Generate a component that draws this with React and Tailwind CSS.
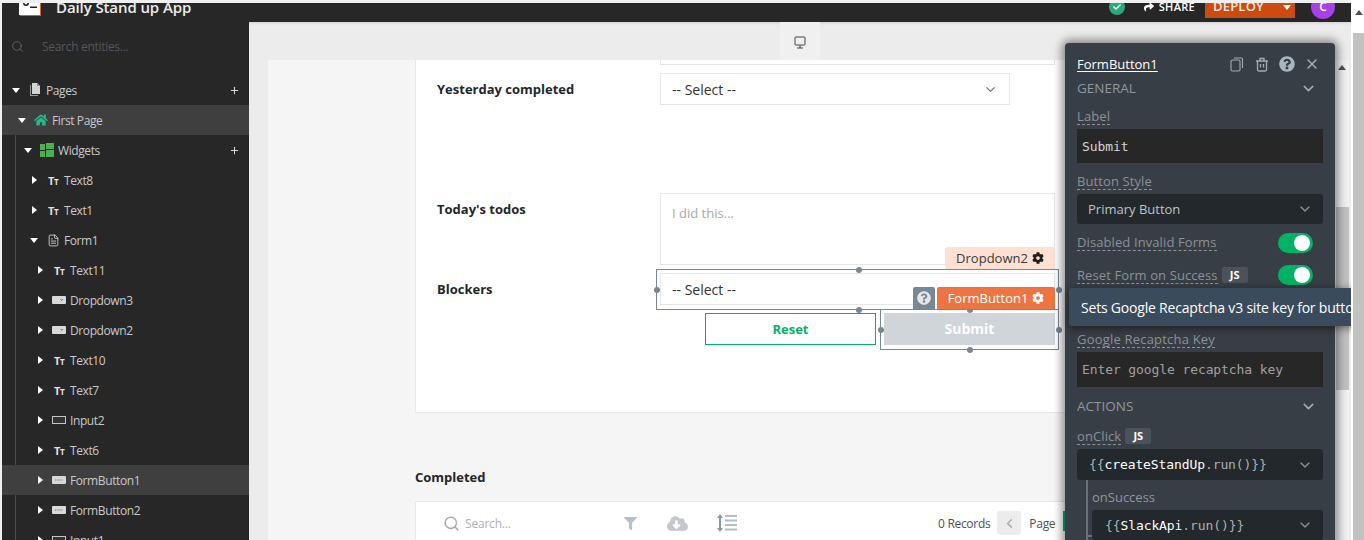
import { ChevronDown, ChevronLeft, Plus, Search, X, FileText } from 'lucide-react'
import { FaCog, FaHome, FaShare, FaFilter, FaCloudDownloadAlt, FaQuestionCircle, FaCheck } from 'react-icons/fa'

const sans = '[font-family:"Open_Sans",sans-serif]'

// tree icons
function TextIcon() {
  return (
    <span className="flex items-baseline font-bold leading-none text-[#e2e2e2]">
      <span className="text-[11px]">T</span>
      <span className="text-[8px]">T</span>
    </span>
  )
}

function DropdownIcon() {
  return (
    <svg width="14" height="8" viewBox="0 0 14 8" className="shrink-0">
      <rect width="14" height="8" rx="1" fill="#d8d8d8" />
      <path d="M8.500 3l1.200 1.400L11 3" fill="none" stroke="#555" strokeWidth="0.8" />
    </svg>
  )
}

function InputIcon() {
  return (
    <svg width="14" height="8" viewBox="0 0 14 8" className="shrink-0">
      <rect x="0.500" y="0.500" width="13" height="7" fill="#333" stroke="#c4c4c4" />
    </svg>
  )
}

function ButtonIcon() {
  return (
    <svg width="14" height="8" viewBox="0 0 14 8" className="shrink-0">
      <rect width="14" height="8" rx="1" fill="#d8d8d8" />
      <path d="M3 4h8" stroke="#777" strokeWidth="1.200" strokeDasharray="1 0.600" />
    </svg>
  )
}

function PagesIcon() {
  return (
    <svg width="12" height="14" viewBox="0 0 12 14" className="shrink-0">
      <path d="M1 2v11h8v-1H2V2z" fill="#9a9a9a" />
      <path d="M3 0h5l3 3v8H3z" fill="#d4d4d4" />
      <path d="M8 0v3h3z" fill="#8a8a8a" />
    </svg>
  )
}

function WidgetsIcon() {
  return (
    <svg width="14" height="14" viewBox="0 0 14 14" className="shrink-0">
      <rect width="5" height="6" y="1" fill="#4caf50" />
      <rect x="6" width="8" height="6" fill="#4caf50" />
      <rect y="8" width="5" height="6" fill="#4caf50" />
      <rect x="6" y="7" width="8" height="7" fill="#4caf50" />
    </svg>
  )
}

function Caret({ open }) {
  if (open) {
    return <span className="mr-[8px] h-0 w-0 shrink-0 border-x-[4px] border-t-[5px] border-x-transparent border-t-white" />
  }
  return <span className="mr-[9px] h-0 w-0 shrink-0 border-y-[4px] border-l-[5px] border-y-transparent border-l-white" />
}

function Row({ pad, open, icon, label, active, add, line }) {
  return (
    <div className={`relative flex h-[30px] items-center text-[12px] tracking-[-0.4px] text-[#c9c9c9] ${active ? 'bg-[#3f3f3f]' : ''} ${pad}`}>
      {line && <span className="absolute bottom-0 left-[13px] top-0 w-px bg-[#4a4a4a]" />}
      <Caret open={open} />
      <span className="flex w-[14px] shrink-0 justify-center">{icon}</span>
      <span className="ml-[4px] pt-[2px]">{label}</span>
      {add && <Plus size={11} strokeWidth={2.2} className="absolute left-[227px] text-[#d8d8d8]" />}
    </div>
  )
}

function Sidebar() {
  const deep = 'pl-[36px]'
  const inner = 'pl-[30px]'
  return (
    <aside className="w-[247px] shrink-0 bg-[#272727]">
      <div className="flex h-[53px] items-center gap-[18px] pb-[4px] pl-[9px] text-[12px] tracking-[-0.3px] text-[#55555c]">
        <Search size={13} strokeWidth={1.6} className="text-[#60666b]" />
        <span>Search entities...</span>
      </div>
      <Row pad="pl-[10px]" open icon={<PagesIcon />} label="Pages" add />
      <Row pad="pl-[16px]" open active icon={<FaHome size={14} className="shrink-0 text-[#2bb58a]" />} label="First Page" />
      <Row pad="pl-[22px]" open line icon={<WidgetsIcon />} label="Widgets" add />
      <Row pad={inner} line icon={<TextIcon />} label="Text8" />
      <Row pad={inner} line icon={<TextIcon />} label="Text1" />
      <Row pad="pl-[28px]" open line icon={<FileText size={13} strokeWidth={1.5} className="shrink-0 text-[#e2e2e2]" />} label="Form1" />
      <Row pad={deep} line icon={<TextIcon />} label="Text11" />
      <Row pad={deep} line icon={<DropdownIcon />} label="Dropdown3" />
      <Row pad={deep} line icon={<DropdownIcon />} label="Dropdown2" />
      <Row pad={deep} line icon={<TextIcon />} label="Text10" />
      <Row pad={deep} line icon={<TextIcon />} label="Text7" />
      <Row pad={deep} line icon={<InputIcon />} label="Input2" />
      <Row pad={deep} line icon={<TextIcon />} label="Text6" />
      <Row pad={deep} active icon={<ButtonIcon />} label="FormButton1" />
      <Row pad={deep} line icon={<ButtonIcon />} label="FormButton2" />
      <Row pad={deep} line icon={<InputIcon />} label="Input1" />
    </aside>
  )
}

function Header() {
  return (
    <header className="h-[19px] shrink-0 overflow-hidden bg-[#272727]">
      <div className="flex h-[8px] items-center pl-[17px] pr-[16px] text-white">
        <svg width="22" height="18" viewBox="0 0 22 18" className="shrink-0">
          <rect x="1" y="0" width="21" height="18" fill="#d9622b" />
          <rect x="0" y="0" width="21" height="17" fill="#fff" />
          <circle cx="7" cy="5" r="2.200" fill="none" stroke="#222" strokeWidth="1.600" />
          <rect x="11" y="8.500" width="7" height="1.500" fill="#222" />
        </svg>
        <span className="ml-[15px] text-[15px] font-semibold leading-none tracking-[-0.1px] text-[#ececec]">Daily Stand up App</span>
        <div className="ml-auto flex items-center">
          <span className="flex h-[16px] w-[16px] items-center justify-center rounded-full bg-[#2fa77d]">
            <FaCheck size={8} className="text-[#d8f5ea]" />
          </span>
          <FaShare size={10} className="ml-[19px] text-white" />
          <span className="ml-[5px] text-[11px] font-semibold tracking-[0.3px]">SHARE</span>
          <div className="ml-[10px] flex h-[22px] w-[90px] items-center bg-[#cb4b10] pl-[8px] text-[13px] font-semibold tracking-[0.2px] text-[#ffe7db]">
            <span>DEPLOY</span>
            <span className="ml-[19px] h-0 w-0 border-x-[4px] border-t-[5px] border-x-transparent border-t-white" />
          </div>
          <span className="ml-[16px] flex h-[24px] w-[24px] items-center justify-center rounded-full bg-[#a93fe8] text-[12px] font-semibold">C</span>
        </div>
      </div>
    </header>
  )
}

function FormSelect({ className }) {
  return (
    <div className={`flex items-center justify-between border border-[#e7e7e7] bg-white pl-[11px] text-[14px] text-[#333] ${className}`}>
      <span>-- Select --</span>
      <ChevronDown size={15} strokeWidth={2} className="text-[#75797d]" />
    </div>
  )
}

function Handle({ className }) {
  return <span className={`absolute h-[6px] w-[6px] -translate-x-1/2 -translate-y-1/2 rounded-full bg-[#768896] ${className}`} />
}

// selection frames, tags and handles lie over the form
function Selection() {
  return (
    <>
      <div className="absolute left-[240px] top-[209px] h-[41px] w-[403px] border border-[#768896]" />
      <div className="absolute left-[464px] top-[249px] h-[41px] w-[179px] border border-[#768896]" />
      <Handle className="left-[443px] top-[210px]" />
      <Handle className="left-[443px] top-[250px]" />
      <Handle className="left-[241px] top-[230px]" />
      <Handle className="left-[643px] top-[230px]" />
      <Handle className="left-[554px] top-[250px]" />
      <Handle className="left-[554px] top-[290px]" />
      <Handle className="left-[465px] top-[270px]" />
      <Handle className="left-[643px] top-[270px]" />
      <div className="absolute left-[529px] top-[187px] flex h-[22px] w-[110px] items-center justify-center gap-[4px] rounded-t-[2px] bg-[#ffe0d2] text-[13px] text-[#3a3a3a]">
        <span className="pt-[2px]">Dropdown2</span>
        <FaCog size={12} className="text-[#1f1f1f]" />
      </div>
      <div className="absolute left-[497px] top-[227px] flex h-[22px] w-[22px] items-center justify-center rounded-t-[2px] bg-[#768896]">
        <FaQuestionCircle size={14} className="text-[#e6e6e6]" />
      </div>
      <div className="absolute left-[521px] top-[227px] flex h-[22px] w-[118px] items-center justify-center gap-[4px] rounded-t-[2px] bg-[#ee7541] text-[13px] text-white">
        <span className="pt-[2px]">FormButton1</span>
        <FaCog size={12} />
      </div>
    </>
  )
}

function FormCard() {
  return (
    <section className="relative h-[353px] w-[700px] shrink-0 border-b border-l border-[#e7e7e7] bg-white">
      <div className="ml-[244px] h-[5px] w-[395px] border border-t-0 border-[#e7e7e7]" />
      <div className="mt-[8px] flex">
        <span className="w-[244px] pl-[21px] pt-[7px] text-[13px] font-bold text-[#22272b]">Yesterday completed</span>
        <FormSelect className="h-[32px] w-[350px] pr-[11px]" />
      </div>
      <div className="mt-[88px] flex">
        <span className="w-[244px] pl-[21px] pt-[7px] text-[13px] font-bold text-[#22272b]">Today's todos</span>
        <div className="h-[72px] w-[395px] border border-[#e7e7e7] pl-[11px] pt-[10px] text-[13px] text-[#a9a9a9]">I did this...</div>
      </div>
      <div className="mt-[8px] flex">
        <span className="w-[244px] pl-[21px] pt-[7px] text-[13px] font-bold text-[#22272b]">Blockers</span>
        <FormSelect className="h-[32px] w-[395px] pr-[12px]" />
      </div>
      <div className="ml-[289px] mt-[8px] flex gap-[8px]">
        <button className="h-[32px] w-[171px] border border-[#03b365] pt-[2px] text-[13px] font-bold text-[#03b365]">Reset</button>
        <button className="h-[32px] w-[171px] bg-[#d0d5da] pb-[2px] text-[14px] font-bold text-white">Submit</button>
      </div>
      <Selection />
    </section>
  )
}

function RowHeightIcon() {
  return (
    <svg width="21" height="20" viewBox="0 0 21 20" className="shrink-0">
      <path d="M4 1l3 4H5v10h2l-3 4-3-4h2V5H1z" fill="#8b99a6" />
      <path d="M9 3h12M9 7.500h12M9 12h12M9 16.500h12" stroke="#b2bdc7" strokeWidth="1.800" />
    </svg>
  )
}

function TableCard() {
  return (
    <section className="mt-[15px] flex h-[60px] w-[700px] shrink-0 items-start border border-[#e7e7e7] bg-white pt-[9px] text-[12px]">
      <Search size={17} strokeWidth={2} className="ml-[27px] mt-[4px] text-[#a3a8ad]" />
      <span className="ml-[5px] mt-[4px] w-[150px] tracking-[-0.2px] text-[#b0b0b0]">Search...</span>
      <FaFilter size={13} className="ml-[9px] mt-[6px] text-[#b8bfc6]" />
      <FaCloudDownloadAlt size={21} className="ml-[30px] mt-[2px] text-[#c2c8cd]" />
      <span className="ml-[28px] mt-[2px]"><RowHeightIcon /></span>
      <span className="ml-[201px] mt-[4px] tracking-[-0.3px] text-[#4c5257]">0 Records</span>
      <span className="ml-[7px] flex h-[24px] w-[24px] items-center justify-center rounded-[3px] bg-[#ececec]">
        <ChevronLeft size={15} strokeWidth={2.4} className="text-[#a3abb3]" />
      </span>
      <span className="ml-[8px] mt-[4px] tracking-[-0.3px] text-[#4c5257]">Page</span>
      <span className="ml-[8px] h-[20px] w-[4px] bg-[#03b365]" />
    </section>
  )
}

function Canvas() {
  return (
    <main className="flex min-w-0 flex-1 flex-col bg-[#ececec]">
      <div className="flex h-[38px] shrink-0 justify-center shadow-[inset_0_3px_3px_-2px_rgba(0,0,0,0.12)]">
        <div className="flex w-[40px] items-center justify-center bg-[#f0f0f0] pt-[2px]">
          <svg width="12" height="13" viewBox="0 0 12 13">
            <rect x="1" y="1" width="10" height="8" rx="0.500" fill="none" stroke="#444" />
            <path d="M6 9v3M3 12h6" stroke="#444" />
          </svg>
        </div>
      </div>
      <div className="flex min-h-0 flex-1">
        <div className="ml-[19px] flex min-w-0 flex-1 flex-col overflow-hidden bg-[#f5f5f5] pl-[147px]">
          <FormCard />
          <h3 className="mt-[55px] text-[13px] font-bold leading-[18px] text-[#22272b]">Completed</h3>
          <TableCard />
        </div>
        <div className="relative w-[13px] shrink-0 bg-[#f1f1f1] pt-[147px]">
          <span className="absolute left-[2px] top-[5px] h-0 w-0 border-x-[4px] border-b-[5px] border-x-transparent border-b-[#4f4f4f]" />
          <div className="h-[183px] bg-[#c1c1c1]" />
        </div>
        <div className="w-[2px] shrink-0" />
      </div>
    </main>
  )
}

function PaneLabel({ children, className = '' }) {
  return <span className={`border-b border-dashed border-[#8a9199] text-[13px] leading-[16px] tracking-[0.1px] text-[#8a9199] ${className}`}>{children}</span>
}

function JsBadge() {
  return <span className="ml-[4px] flex h-[16px] w-[26px] items-center justify-center rounded-[2px] bg-[#4b5259] text-[11px] font-bold text-white">JS</span>
}

function Toggle() {
  return (
    <span className="flex h-[20px] w-[35px] items-center justify-end rounded-full bg-[#03b365] pr-[3px]">
      <span className="h-[16px] w-[16px] rounded-full bg-white" />
    </span>
  )
}

function SectionTitle({ children, className }) {
  return (
    <div className={`flex h-[20px] items-center justify-between pr-[6px] text-[13.5px] text-[#8f969d] ${className}`}>
      <span>{children}</span>
      <ChevronDown size={17} strokeWidth={2.2} className="text-[#a3abb3]" />
    </div>
  )
}

function PaneSelect({ children, className = '', textClass = '' }) {
  return (
    <div className={`flex items-center justify-between rounded-[3px] bg-[#22282b] pr-[10px] ${className}`}>
      <span className={textClass}>{children}</span>
      <ChevronDown size={16} strokeWidth={2} className="text-[#8a9199]" />
    </div>
  )
}

const mono = '[font-family:"DejaVu_Sans_Mono",monospace] text-[13px] tracking-[-0.1px]'

// floats over the canvas, same as the real property pane
function PropertyPane() {
  return (
    <aside className="absolute left-[1065px] top-[43px] h-[520px] w-[270px] rounded-t-[4px] bg-[#383e45] px-[12px] pt-[11px] shadow-[0_0_10px_3px_rgba(0,0,0,0.45)]">
      <div className="flex h-[20px] items-center text-[13px] text-white">
        <span className="mt-[1px] underline underline-offset-2">FormButton1</span>
        <svg width="14" height="15" viewBox="0 0 14 15" className="ml-[72px] text-[#a3abb3]" fill="none" stroke="currentColor" strokeWidth="1.100">
          <rect x="1" y="3" width="9" height="11" rx="1.500" />
          <path d="M4 1h7.500a1 1 0 0 1 1 1v9" />
        </svg>
        <svg width="14" height="15" viewBox="0 0 14 15" className="ml-[11px] text-[#a3abb3]" fill="none" stroke="currentColor" strokeWidth="1.300">
          <path d="M1 4h12M5 4V1.500h4V4M2.500 4v8.500a1.500 1.500 0 0 0 1.500 1.500h6a1.500 1.500 0 0 0 1.500-1.500V4M5.500 7v3.500M8.500 7v3.500" />
        </svg>
        <FaQuestionCircle size={16} className="ml-[10px] text-[#a9b6c2]" />
        <X size={16} strokeWidth={2.2} className="ml-[9px] text-[#a9b0b7]" />
      </div>
      <SectionTitle className="mt-[4px]">GENERAL</SectionTitle>
      <div className="mt-[9px] flex h-[18px] items-start pt-px"><PaneLabel>Label</PaneLabel></div>
      <div className={`mt-[4px] flex h-[34px] items-center bg-[#272727] pl-[5px] pt-[2px] text-[#d4d4d4] ${mono}`}>Submit</div>
      <div className="mt-[9px] flex h-[18px] items-start pt-px"><PaneLabel>Button Style</PaneLabel></div>
      <PaneSelect className="mt-[4px] h-[30px] pl-[11px]" textClass="pt-[2px] text-[13px] text-[#bfc4c9]">Primary Button</PaneSelect>
      <div className="mt-[9px] flex h-[20px] items-center justify-between pr-[10px]">
        <PaneLabel className="-mt-[2px]">Disabled Invalid Forms</PaneLabel>
        <Toggle />
      </div>
      <div className="mt-[12px] flex h-[20px] items-center pr-[10px]">
        <PaneLabel>Reset Form on Success</PaneLabel>
        <JsBadge />
        <span className="ml-auto"><Toggle /></span>
      </div>
      <div className="mt-[45px] flex h-[18px] items-start pt-px"><PaneLabel className="border-[#7d848b] text-[#7d848b] tracking-[0.2px]">Google Recaptcha Key</PaneLabel></div>
      <div className={`mt-[4px] flex h-[35px] items-center bg-[#272727] pl-[5px] text-[#a0a0a0] ${mono}`}>Enter google recaptcha key</div>
      <SectionTitle className="mt-[9px]">ACTIONS</SectionTitle>
      <div className="mt-[11px] flex h-[18px] items-center">
        <PaneLabel>onClick</PaneLabel>
        <JsBadge />
      </div>
      <PaneSelect className="mt-[4px] h-[31px] pl-[12px]" textClass={`text-[#a9b0b7] ${mono}`}>
        {'{{'}<span className="text-white">createStandUp</span>.run(){'}}'}
      </PaneSelect>
      <div className="relative ml-[9px] border-l-2 border-[#6b7178] pl-[4px] pt-[8px]">
        <div className="h-[18px] text-[13px] leading-[18px] text-[#8f969d]">onSuccess</div>
        <PaneSelect className="mt-[4px] h-[30px] pl-[13px]" textClass={`pt-[2px] text-[#a9b0b7] ${mono}`}>
          {'{{'}<span className="text-white">SlackApi</span>.run(){'}}'}
        </PaneSelect>
        <span className="absolute left-0 top-[55px] h-[2px] w-[4px] bg-[#6b7178]" />
      </div>
    </aside>
  )
}

function Tooltip() {
  return (
    <div className="absolute left-[1069px] top-[288px] flex h-[38px] w-[330px] items-center rounded-l-[3px] bg-[#394b5c] pl-[12px] text-[14px] tracking-[-0.2px] text-white shadow-[0_2px_8px_rgba(0,0,0,0.5)]">
      Sets Google Recaptcha v3 site key for button
    </div>
  )
}

export default function App() {
  return (
    <div className={`flex h-[540px] w-[1364px] overflow-hidden bg-white ${sans}`}>
      <div className="relative flex h-full w-[1351px] shrink-0 flex-col overflow-hidden bg-[#f0f0f0] pl-[2px] pt-[3px]">
        <Header />
        <div className="flex min-h-0 flex-1">
          <Sidebar />
          <Canvas />
        </div>
        <PropertyPane />
        <Tooltip />
      </div>
      {/* page scrollbar */}
      <div className="ml-[2px] flex w-[11px] flex-col">
        <div className="flex h-[33px] justify-center pt-[10px]">
          <span className="h-0 w-0 border-x-[4px] border-b-[5px] border-x-transparent border-b-[#4f4f4f]" />
        </div>
        <div className="flex-1 bg-[#c1c3c1]" />
      </div>
    </div>
  )
}
